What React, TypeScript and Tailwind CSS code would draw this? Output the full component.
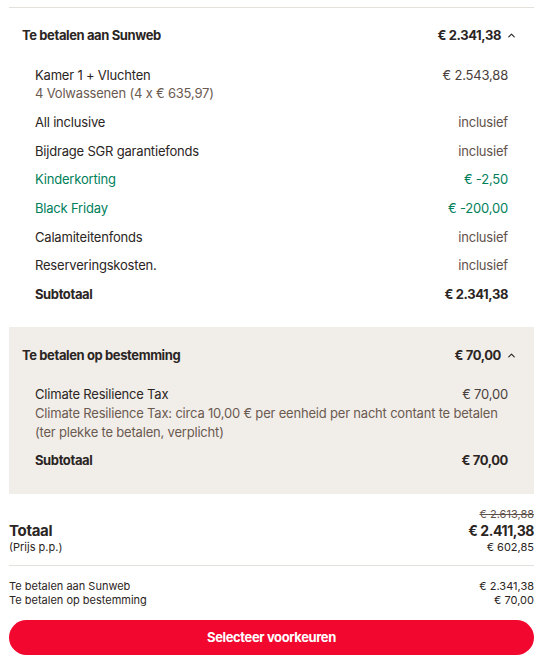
import { ChevronUp } from "lucide-react";

interface Line {
  label: string;
  value: string;
  sub?: string;
  tone?: "green" | "muted";
}

const sunwebLines: Line[] = [
  { label: "Kamer 1 + Vluchten", value: "€ 2.543,88", sub: "4 Volwassenen (4 x € 635,97)" },
  { label: "All inclusive", value: "inclusief", tone: "muted" },
  { label: "Bijdrage SGR garantiefonds", value: "inclusief", tone: "muted" },
  { label: "Kinderkorting", value: "€ -2,50", tone: "green" },
  { label: "Black Friday", value: "€ -200,00", tone: "green" },
  { label: "Calamiteitenfonds", value: "inclusief", tone: "muted" },
  { label: "Reserveringskosten.", value: "inclusief", tone: "muted" },
];

const destinationLines: Line[] = [
  {
    label: "Climate Resilience Tax",
    value: "€ 70,00",
    sub: "Climate Resilience Tax: circa 10,00 € per eenheid per nacht contant te betalen (ter plekke te betalen, verplicht)",
  },
];

function PriceLine({ line }: { line: Line }) {
  const green = line.tone === "green";
  return (
    <div className="flex flex-col">
      <div className="flex justify-between gap-6">
        <span className={green ? "text-[#00805a]" : "text-[#2b2523]"}>{line.label}</span>
        <span
          className={`whitespace-nowrap ${
            green ? "text-[#00805a]" : line.tone === "muted" ? "text-[#5f514a]" : "text-[#4a403b]"
          }`}
        >
          {line.value}
        </span>
      </div>
      {line.sub && <span className="text-[#6b5a50] max-w-[468px]">{line.sub}</span>}
    </div>
  );
}

function Section({
  title,
  total,
  lines,
  shaded,
}: {
  title: string;
  total: string;
  lines: Line[];
  shaded?: boolean;
}) {
  return (
    <section className={shaded ? "bg-[#f1eeea]" : ""}>
      <div
        className={`flex items-center justify-between pl-[13px] pr-[17px] font-bold tracking-[-0.03em] text-[#2b2523] ${
          shaded ? "pt-[19px]" : "pt-[18px]"
        }`}
      >
        <span>{title}</span>
        <span className="flex items-center gap-[5px]">
          {total}
          <ChevronUp size={11} strokeWidth={2.5} className="text-[#2b2523]" />
        </span>
      </div>
      <div
        className={`flex flex-col gap-[10px] px-[26px] pt-[21px] ${shaded ? "pb-[24px]" : "pb-[23px]"}`}
      >
        {lines.map((l) => (
          <PriceLine key={l.label} line={l} />
        ))}
        <div className="flex justify-between font-bold tracking-[-0.03em] text-[#2b2523]">
          <span>Subtotaal</span>
          <span>{total}</span>
        </div>
      </div>
    </section>
  );
}

export default function App() {
  return (
    <div
      className="min-h-screen bg-white pl-[9px] pr-[5px] pt-[7px] text-[13px] leading-[18.67px] tracking-[-0.015em]"
      style={{ fontFamily: "Inter, 'Liberation Sans', sans-serif" }}
    >
      <div className="border-t border-[#e4e0db]">
        {/* Betalen aan Sunweb */}
        <Section title="Te betalen aan Sunweb" total="€ 2.341,38" lines={sunwebLines} />

        {/* Betalen op bestemming */}
        <Section title="Te betalen op bestemming" total="€ 70,00" lines={destinationLines} shaded />
      </div>

      {/* Totaal */}
      <div className="pt-[13px] pb-[10px] flex justify-between items-end text-[#2b2523]">
        <div className="flex flex-col">
          <span className="text-[15px] leading-[18px] font-bold tracking-[-0.02em]">Totaal</span>
          <span className="text-[11px] leading-[15px] tracking-normal">(Prijs p.p.)</span>
        </div>
        <div className="flex flex-col items-end tracking-normal">
          <span className="text-[11px] leading-[14px] text-[#5f514a] line-through">€ 2.613,88</span>
          <span className="text-[14px] leading-[19px] font-bold tracking-[-0.03em]">€ 2.411,38</span>
          <span className="text-[11px] leading-[15px]">€ 602,85</span>
        </div>
      </div>

      <div className="border-t border-[#e4e0db] pt-[13px] text-[11px] leading-[14px] tracking-normal text-[#2b2523]">
        <div className="flex justify-between">
          <span>Te betalen aan Sunweb</span>
          <span>€ 2.341,38</span>
        </div>
        <div className="flex justify-between">
          <span>Te betalen op bestemming</span>
          <span>€ 70,00</span>
        </div>
      </div>

      <button className="mt-[13px] w-full h-[35px] rounded-full bg-[#f2072f] text-white font-bold text-[13px] tracking-[-0.03em]">
        Selecteer voorkeuren
      </button>
    </div>
  );
}
